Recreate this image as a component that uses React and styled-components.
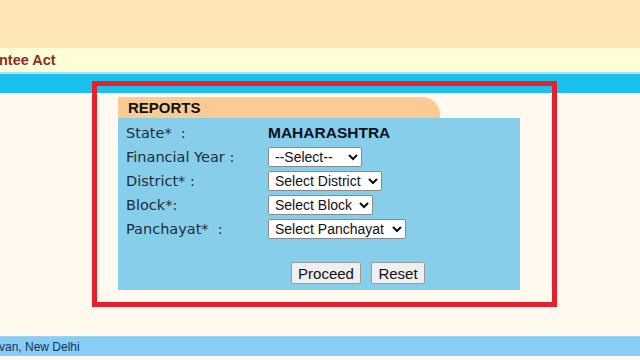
import React from "react";
import styled, { createGlobalStyle } from "styled-components";

const GlobalStyle = createGlobalStyle`
  html, body { margin: 0; padding: 0; }
  body {
    background: #fff9ef;
    font-family: "DejaVu Sans", Verdana, sans-serif;
    width: 640px;
    height: 360px;
    overflow: hidden;
    position: relative;
  }
`;

const Page = styled.div`
  display: flex;
  flex-direction: column;
  width: 640px;
  height: 360px;
  position: relative;
  overflow: hidden;
`;

const Header = styled.div`
  height: 48px;
  background: #fde5b8;
`;

const TitleStrip = styled.div`
  height: 24px;
  background: #fffdd7;
  display: flex;
  align-items: center;
  overflow: hidden;
  border-bottom: 2px solid #a6e2f2;
`;

const TitleText = styled.span`
  font-family: "Liberation Sans", Arial, sans-serif;
  font-weight: bold;
  font-size: 14.5px;
  color: #8e2e20;
  white-space: nowrap;
  margin-left: -1px;
`;

const CyanBar = styled.div`
  height: 19px;
  background: #1cc0ec;
`;

const Main = styled.div`
  flex: 1;
  padding: 4px 0 0 118px;
  display: flex;
  flex-direction: column;
`;

const Panel = styled.div`
  width: 402px;
  display: flex;
  flex-direction: column;
`;

const Tab = styled.div`
  width: 322px;
  height: 21px;
  box-sizing: border-box;
  background: #fbcb94;
  border-top-right-radius: 18px;
  padding: 2px 0 0 10px;
  font-family: "Liberation Sans", Arial, sans-serif;
  font-weight: bold;
  font-size: 15px;
  color: #111;
`;

const Box = styled.div`
  background: #87ceeb;
  height: 172px;
  box-sizing: border-box;
  padding: 3px 0 0 8px;
  display: flex;
  flex-direction: column;
`;

const Row = styled.div`
  display: grid;
  grid-template-columns: 142px auto;
  align-items: center;
  height: 24px;
`;

const Label = styled.span`
  font-family: "DejaVu Sans", Verdana, sans-serif;
  font-size: 14.5px;
  color: #1c2d3c;
  white-space: pre;
`;

const StateValue = styled.span`
  font-family: "Liberation Sans", Arial, sans-serif;
  font-weight: bold;
  font-size: 15.5px;
  color: #0d1020;
`;

const Select = styled.select`
  justify-self: start;
  height: 20px;
  box-sizing: border-box;
  font-family: "Liberation Sans", Arial, sans-serif;
  font-size: 14px;
  color: #111;
  background: #fff;
  border: 1px solid #8a8a8a;
  border-radius: 2px;
  padding: 0 0 0 2px;
  width: ${(p) => p.$w}px;
`;

const Buttons = styled.div`
  display: flex;
  gap: 10px;
  margin: 21px 0 0 165px;
`;

const Button = styled.button`
  height: 22px;
  width: ${(p) => p.$w}px;
  box-sizing: border-box;
  font-family: "Liberation Sans", Arial, sans-serif;
  font-size: 15px;
  color: #111;
  background: #efefef;
  border: 1px solid #9a9a9a;
  border-radius: 2px;
  padding: 0;
`;

const Spacer = styled.div`
  flex: 1;
`;

const Footer = styled.div`
  height: 19px;
  background: #87cdf5;
  border-top: 1px solid #9fd3ea;
  display: flex;
  align-items: center;
  overflow: hidden;
  margin-bottom: 4px;
`;

const FooterText = styled.span`
  font-family: "Liberation Sans", Arial, sans-serif;
  font-size: 12px;
  color: #1c2f55;
  white-space: nowrap;
  margin-left: -1px;
`;

const Highlight = styled.div`
  position: absolute;
  left: 92px;
  top: 81px;
  width: 465px;
  height: 226px;
  box-sizing: border-box;
  border: 5px solid #e5202a;
  pointer-events: none;
`;

const rows = [
  { label: "Financial Year :", opt: "--Select--", w: 94 },
  { label: "District* :", opt: "Select District", w: 114 },
  { label: "Block*:", opt: "Select Block", w: 105 },
  { label: "Panchayat*  :", opt: "Select Panchayat", w: 138 },
];

export default function App() {
  return (
    <>
      <GlobalStyle />
      <Page>
        <Header />
        <TitleStrip>
          <TitleText>ntee Act</TitleText>
        </TitleStrip>
        <CyanBar />
        <Main>
          <Panel>
            <Tab>REPORTS</Tab>
            <Box>
              <Row>
                <Label>State*  :</Label>
                <StateValue>MAHARASHTRA</StateValue>
              </Row>
              {rows.map((r) => (
                <Row key={r.label}>
                  <Label>{r.label}</Label>
                  <Select $w={r.w} defaultValue="0">
                    <option value="0">{r.opt}</option>
                  </Select>
                </Row>
              ))}
              <Buttons>
                <Button $w={70}>Proceed</Button>
                <Button $w={54}>Reset</Button>
              </Buttons>
            </Box>
          </Panel>
          <Spacer />
        </Main>
        <Footer>
          <FooterText>van, New Delhi</FooterText>
        </Footer>
        <Highlight />
      </Page>
    </>
  );
}
